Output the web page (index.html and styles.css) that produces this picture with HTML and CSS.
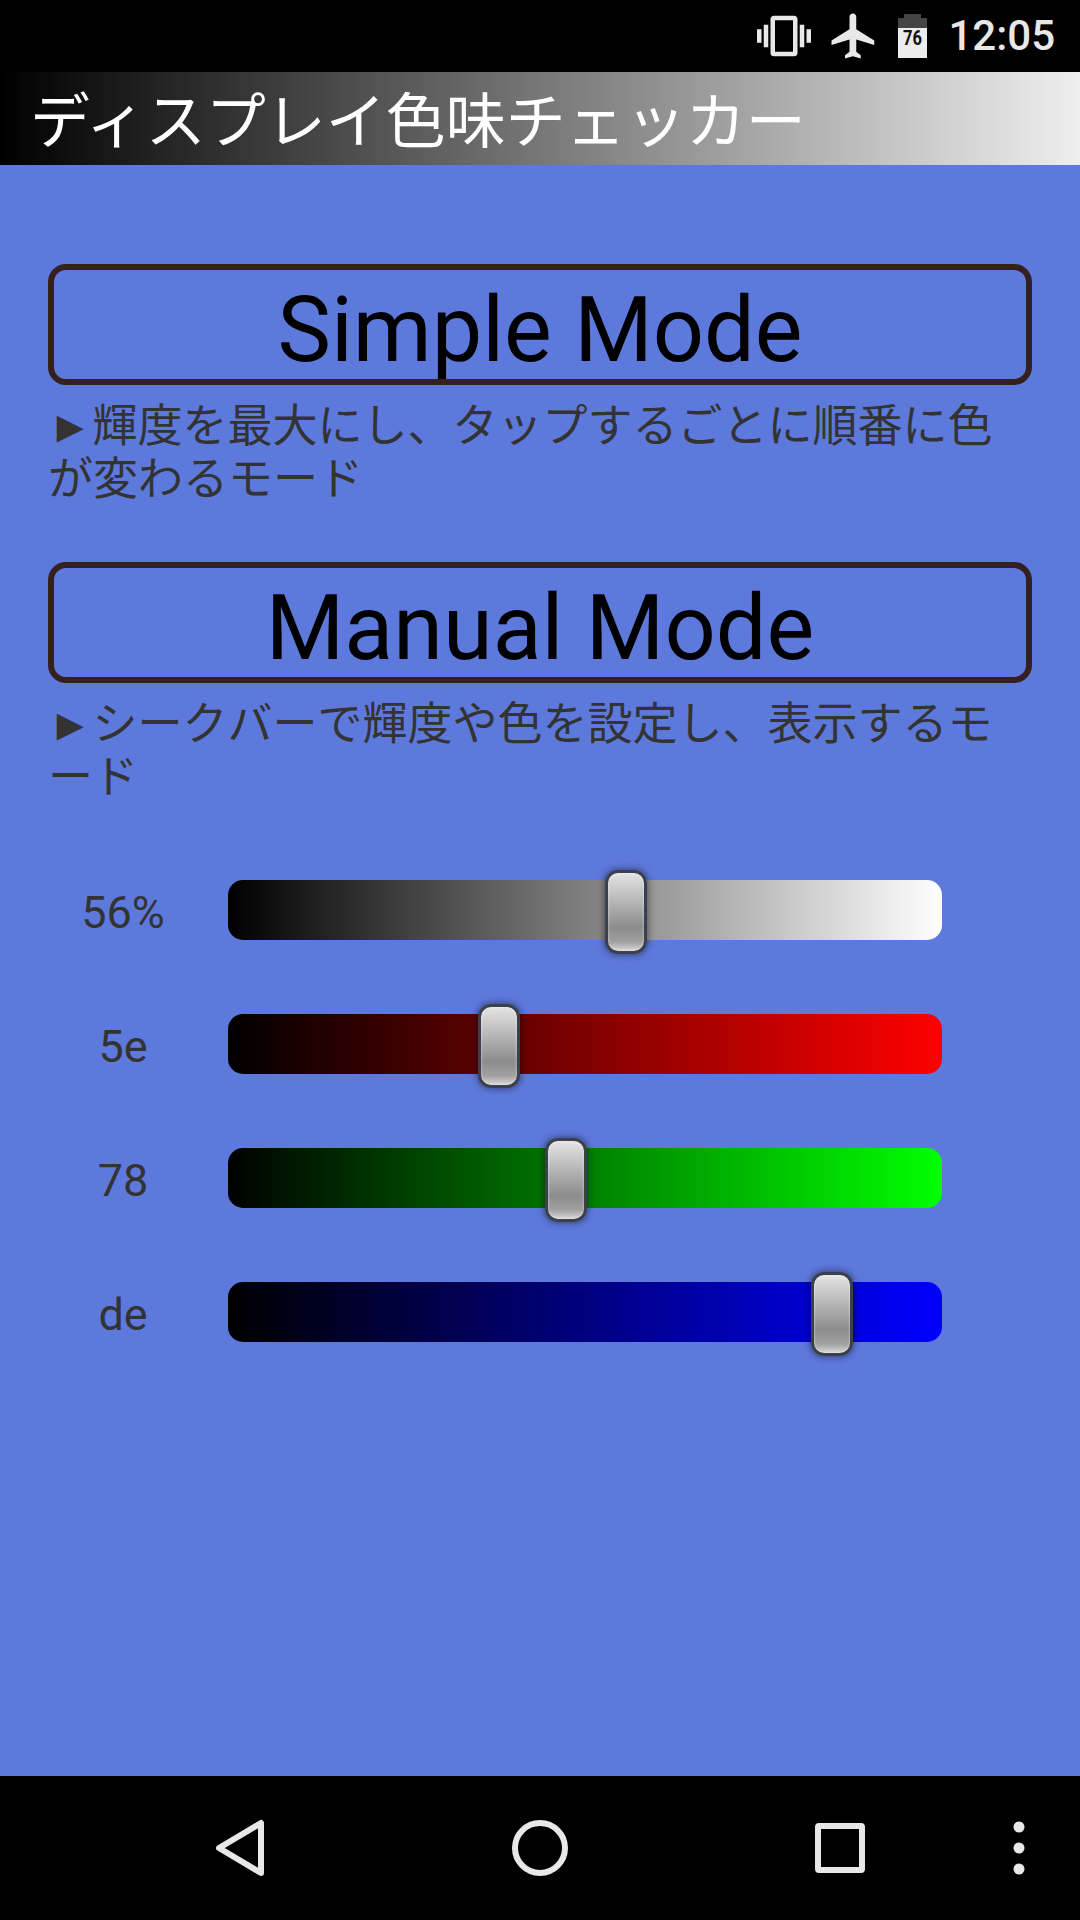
FILE: index.html
```html
<!DOCTYPE html>
<html lang="ja">
<head>
<meta charset="utf-8">
<title>ディスプレイ色味チェッカー</title>
<link rel="stylesheet" href="styles.css">
</head>
<body>
<div class="screen">
  <header class="status-bar">
    <svg class="status-icon vibrate" viewBox="0 0 24 24"><path d="M0 15h2V9H0v6zm3 2h2V7H3v10zm19-8v6h2V9h-2zm-3 8h2V7h-2v10zM16.5 3h-9C6.67 3 6 3.67 6 4.5v15c0 .83.67 1.5 1.5 1.5h9c.83 0 1.5-.67 1.5-1.5v-15c0-.83-.67-1.5-1.5-1.5zM16 19H8V5h8v14z"/></svg>
    <svg class="status-icon plane" viewBox="0 0 24 24"><path d="M21 16v-2l-8-5V3.5c0-.83-.67-1.5-1.5-1.5S10 2.67 10 3.5V9l-8 5v2l8-2.5V19l-2 1.5V22l3.5-1 3.5 1v-1.5L13 19v-5.5l8 2.5z"/></svg>
    <svg class="battery" viewBox="0 0 29 44">
      <path class="battery-empty" d="M0 14V4h6V0h17v4h6v10z"/>
      <rect class="battery-full" x="0" y="14" width="29" height="30"/>
      <text class="battery-text" x="14.5" y="31" textLength="19" lengthAdjust="spacingAndGlyphs">76</text>
    </svg>
    <span class="clock">12:05</span>
  </header>
  <div class="title-bar"><h1 class="title">ディスプレイ色味チェッカー</h1></div>
  <main class="content">
    <section class="mode">
      <button class="mode-button">Simple Mode</button>
      <p class="mode-desc">►輝度を最大にし、タップするごとに順番に色が変わるモード</p>
    </section>
    <section class="mode">
      <button class="mode-button">Manual Mode</button>
      <p class="mode-desc">►シークバーで輝度や色を設定し、表示するモード</p>
    </section>
    <section class="sliders">
      <div class="slider-row">
        <span class="slider-label">56%</span>
        <div class="track track-white"><span class="thumb" style="left:55.7%"></span></div>
      </div>
      <div class="slider-row">
        <span class="slider-label">5e</span>
        <div class="track track-red"><span class="thumb" style="left:37.9%"></span></div>
      </div>
      <div class="slider-row">
        <span class="slider-label">78</span>
        <div class="track track-green"><span class="thumb" style="left:47.3%"></span></div>
      </div>
      <div class="slider-row">
        <span class="slider-label">de</span>
        <div class="track track-blue"><span class="thumb" style="left:84.6%"></span></div>
      </div>
    </section>
  </main>
  <nav class="nav-bar">
    <svg class="nav-icon" viewBox="0 0 84 84"><path class="nav-line" d="M21 42 63 17V67Z"/></svg>
    <svg class="nav-icon" viewBox="0 0 84 84"><circle class="nav-line" cx="42" cy="42" r="25"/></svg>
    <svg class="nav-icon" viewBox="0 0 84 84"><rect class="nav-line" x="20" y="20" width="44" height="44" rx="1"/></svg>
    <svg class="nav-icon nav-menu" viewBox="0 0 84 84"><circle class="nav-dot" cx="42" cy="21" r="5.5"/><circle class="nav-dot" cx="42" cy="42" r="5.5"/><circle class="nav-dot" cx="42" cy="63" r="5.5"/></svg>
  </nav>
</div>
</body>
</html>
```
FILE: styles.css
```css
* { box-sizing: border-box; }
html, body { margin: 0; padding: 0; }
body { background: #000; font-family: Roboto, "Noto Sans CJK JP", sans-serif; }
.screen { width: 1080px; height: 1920px; display: flex; flex-direction: column; overflow: hidden; }

.status-bar { height: 72px; background: #000; display: flex; align-items: center; justify-content: flex-end; padding-right: 25px; }
.status-icon { width: 54px; height: 54px; fill: #e8e8e8; flex: none; }
.plane { margin-left: 16px; }
.battery { width: 29px; height: 44px; margin-left: 17px; flex: none; }
.battery-empty { fill: #444; }
.battery-full { fill: #ececec; }
.battery-text { font-family: Roboto, sans-serif; font-weight: 700; font-size: 21px; text-anchor: middle; fill: #111; }
.clock { margin-left: 21px; font-size: 42px; color: #e8e8e8; font-weight: 500; line-height: 1; }

.title-bar { height: 93px; background: linear-gradient(to right, #000, #eee); display: flex; align-items: center; padding: 0 0 4px 30px; }
.title { margin: 0; font-family: "Noto Sans CJK JP", sans-serif; font-size: 60px; font-weight: 400; color: #fff; line-height: 1; white-space: nowrap; }

.content { flex: 1; background: #5e79dc; padding: 99px 48px 0; display: flex; flex-direction: column; }
.mode { margin-bottom: 60px; }
.mode-button { display: block; width: 100%; height: 121px; margin: 0; padding: 12px 0 0; border: 6px solid #33201f; border-radius: 18px; background: transparent; color: #000; font-family: Roboto, sans-serif; font-size: 90px; line-height: 1; }
.mode-desc { margin: 11px 0 0; font-family: "Noto Sans CJK JP", sans-serif; font-size: 45px; line-height: 53px; color: #333; line-break: loose; font-kerning: none; }

.sliders { display: flex; flex-direction: column; gap: 74px; margin-top: 20px; }
.slider-row { display: flex; align-items: center; height: 60px; }
.slider-label { width: 180px; padding: 5px 30px 0 0; text-align: center; font-size: 45px; color: #333; line-height: 1; flex: none; }
.track { position: relative; width: 714px; height: 60px; border-radius: 15px; }
.track-white { background: linear-gradient(to right, #000, #fff); }
.track-red { background: linear-gradient(to right, #000, #f00); }
.track-green { background: linear-gradient(to right, #000, #0f0); }
.track-blue { background: linear-gradient(to right, #000, #00f); }
.thumb { position: absolute; top: -10px; width: 42px; height: 84px; margin-left: -21px; border: 3px solid #3c3f4c; border-radius: 13px; background: linear-gradient(to bottom, #e4e4e4 0%, #b8b8b8 35%, #8c8c8c 70%, #a0a0a0 88%, #d8d8d8 100%); box-shadow: 0 0 7px 1px rgba(0,0,0,.45), inset 0 0 3px rgba(255,255,255,.6); }

.nav-bar { height: 144px; background: #000; display: flex; align-items: center; padding-left: 198px; gap: 216px; }
.nav-icon { width: 84px; height: 84px; flex: none; }
.nav-line { fill: none; stroke: #e8e8e8; stroke-width: 6; stroke-linejoin: round; }
.nav-dot { fill: #e8e8e8; }
.nav-menu { margin-left: -121px; }
```
